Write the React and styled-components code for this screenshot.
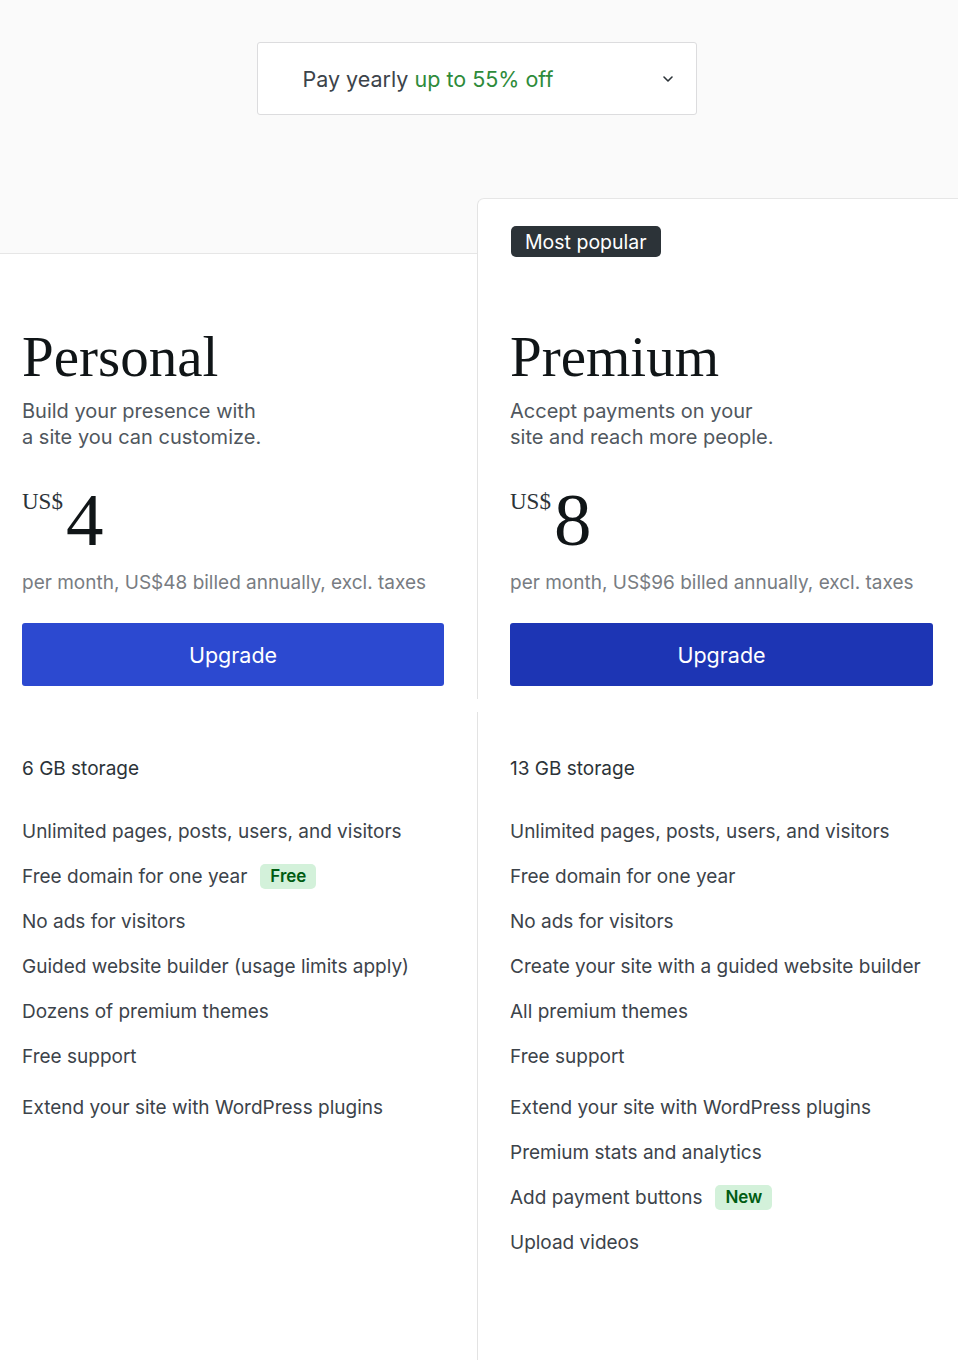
import React from 'react'
import styled, { createGlobalStyle } from 'styled-components'

const GlobalStyle = createGlobalStyle`
  html, body { margin: 0; padding: 0; background: #fff; }
  body { font-family: "Inter", "Noto Sans", sans-serif; -webkit-font-smoothing: antialiased; }
`

const Page = styled.div`
  min-height: 100vh;
  display: flex;
  flex-direction: column;
  background: #fafafa;
`

const TermBar = styled.div`
  display: flex;
  justify-content: center;
  padding: 42px 5px 0 0;
  height: 156px;
`

const TermSelect = styled.button`
  width: 440px;
  height: 73px;
  box-sizing: border-box;
  display: flex;
  align-items: center;
  justify-content: space-between;
  padding: 0 20px 0 45px;
  background: #fff;
  border: 1px solid #dcdcde;
  border-radius: 3px;
  font-family: inherit;
  font-size: 21.5px;
  color: #3c434a;
  cursor: pointer;
`

const Discount = styled.span`
  color: #2e8b3a;
`

const Plans = styled.div`
  flex: 1;
  display: grid;
  grid-template-columns: 477px 1fr;
`

const Column = styled.div`
  display: flex;
  flex-direction: column;
  background: #fff;
  margin-top: ${p => (p.$popular ? '0' : '55px')};
  border-top: ${p => (p.$popular ? 'none' : '1px solid #e6e6e6')};
  border-top-left-radius: ${p => (p.$popular ? '7px' : '0')};
`

const Header = styled.div`
  padding: ${p => (p.$popular ? '27px 25px 13px 32px' : '72px 33px 13px 22px')};
  border-top: ${p => (p.$popular ? '1px solid #e6e6e6' : 'none')};
  border-left: ${p => (p.$popular ? '1px solid #e3e3e3' : 'none')};
  border-top-left-radius: ${p => (p.$popular ? '7px' : '0')};
`

const Features = styled.ul`
  flex: 1;
  display: flex;
  flex-direction: column;
  align-items: flex-start;
  list-style: none;
  margin: 13px 0 0;
  padding: 43px 20px 40px ${p => (p.$popular ? '32px' : '22px')};
  border-left: ${p => (p.$popular ? '1px solid #e3e3e3' : 'none')};
`

const PopularBadge = styled.div`
  display: inline-flex;
  align-items: center;
  height: 31px;
  padding: 0 14px;
  margin: 0 0 69px 1px;
  border-radius: 5px;
  background: #2c3338;
  color: #fff;
  font-size: 19.5px;
`

const PlanName = styled.h2`
  margin: 0;
  font-family: "Liberation Serif", "Times New Roman", serif;
  font-weight: 400;
  font-size: 57px;
  line-height: 62px;
  color: #101517;
`

const Tagline = styled.p`
  margin: 10px 0 0;
  font-size: 20px;
  line-height: 26px;
  color: #50575e;
`

const PriceRow = styled.div`
  display: flex;
  align-items: flex-start;
  gap: 3px;
  margin-top: 32px;
  font-family: "Liberation Serif", "Times New Roman", serif;
  color: #101517;
`

const Currency = styled.span`
  font-size: 23px;
  line-height: 23px;
  margin-top: 8px;
  color: #2c3338;
`

const Amount = styled.span`
  font-size: 75px;
  line-height: 75px;
`

const Billing = styled.p`
  margin: 13px 0 0;
  font-size: 19px;
  line-height: 26px;
  color: #787c82;
`

const UpgradeButton = styled.button`
  display: block;
  width: 100%;
  height: 63px;
  margin-top: 27px;
  border: none;
  border-radius: 3px;
  background: ${p => (p.$popular ? '#1d35b4' : '#2c49d0')};
  color: #fff;
  font-family: inherit;
  font-size: 21.5px;
  cursor: pointer;
`

const Feature = styled.li`
  display: flex;
  align-items: center;
  gap: 13px;
  height: 26px;
  font-size: 19px;
  color: ${p => (p.$strong ? '#2c3338' : '#3c434a')};
  margin-bottom: ${p => (p.$strong ? '37px' : '19px')};
  margin-top: ${p => (p.$extra ? '6px' : '0')};
`

const Tag = styled.span`
  display: inline-flex;
  align-items: center;
  height: 25px;
  padding: 0 10px;
  border-radius: 5px;
  background: #d3f1da;
  color: #005c12;
  font-size: 17px;
  font-weight: 600;
`

const Chevron = () => (
  <svg width="16" height="16" viewBox="0 0 24 24" fill="none" stroke="#2c3338" strokeWidth="2.4" strokeLinecap="round" strokeLinejoin="round">
    <path d="M6 9l6 6 6-6" />
  </svg>
)

const plans = [
  {
    name: 'Personal',
    tagline: ['Build your presence with', 'a site you can customize.'],
    price: '4',
    billing: 'per month, US$48 billed annually, excl. taxes',
    storage: '6 GB storage',
    features: [
      { text: 'Unlimited pages, posts, users, and visitors' },
      { text: 'Free domain for one year', tag: 'Free' },
      { text: 'No ads for visitors' },
      { text: 'Guided website builder (usage limits apply)' },
      { text: 'Dozens of premium themes' },
      { text: 'Free support' },
      { text: 'Extend your site with WordPress plugins', extra: true },
    ],
  },
  {
    name: 'Premium',
    popular: true,
    tagline: ['Accept payments on your', 'site and reach more people.'],
    price: '8',
    billing: 'per month, US$96 billed annually, excl. taxes',
    storage: '13 GB storage',
    features: [
      { text: 'Unlimited pages, posts, users, and visitors' },
      { text: 'Free domain for one year' },
      { text: 'No ads for visitors' },
      { text: 'Create your site with a guided website builder' },
      { text: 'All premium themes' },
      { text: 'Free support' },
      { text: 'Extend your site with WordPress plugins', extra: true },
      { text: 'Premium stats and analytics' },
      { text: 'Add payment buttons', tag: 'New' },
      { text: 'Upload videos' },
    ],
  },
]

export default function App() {
  return (
    <Page>
      <GlobalStyle />
      <TermBar>
        <TermSelect>
          <span>
            Pay yearly <Discount>up to 55% off</Discount>
          </span>
          <Chevron />
        </TermSelect>
      </TermBar>
      <Plans>
        {plans.map(plan => (
          <Column key={plan.name} $popular={plan.popular}>
            <Header $popular={plan.popular}>
              {plan.popular && <PopularBadge>Most popular</PopularBadge>}
              <PlanName>{plan.name}</PlanName>
              <Tagline>
                {plan.tagline[0]}
                <br />
                {plan.tagline[1]}
              </Tagline>
              <PriceRow>
                <Currency>US$</Currency>
                <Amount>{plan.price}</Amount>
              </PriceRow>
              <Billing>{plan.billing}</Billing>
              <UpgradeButton $popular={plan.popular}>Upgrade</UpgradeButton>
            </Header>
            <Features $popular={plan.popular}>
              <Feature $strong>{plan.storage}</Feature>
              {plan.features.map(f => (
                <Feature key={f.text} $extra={f.extra}>
                  {f.text}
                  {f.tag && <Tag>{f.tag}</Tag>}
                </Feature>
              ))}
            </Features>
          </Column>
        ))}
      </Plans>
    </Page>
  )
}
